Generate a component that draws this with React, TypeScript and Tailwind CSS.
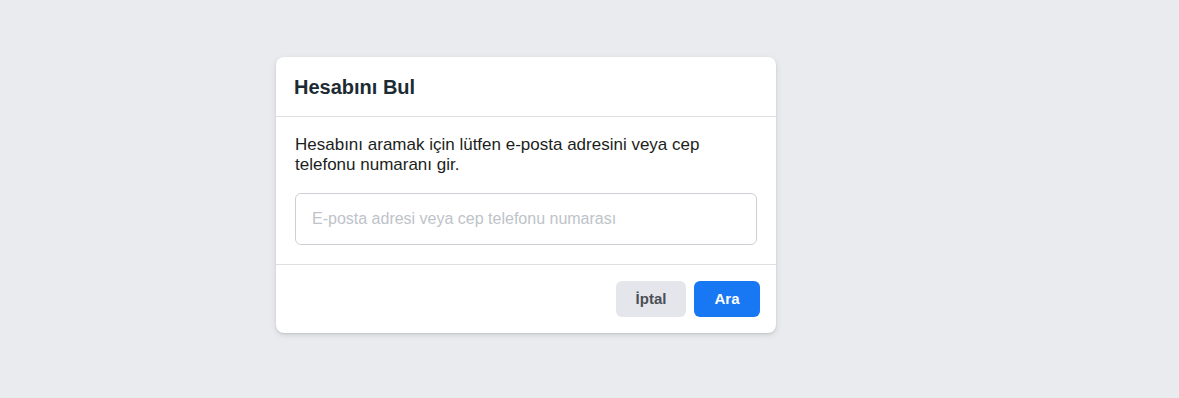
export default function App() {
  return (
    <div
      className="min-h-[398px] bg-[#e9ebee] pl-[276px] pt-[57px]"
      style={{ fontFamily: '"Liberation Sans", Arial, sans-serif' }}
    >
      <div className="w-[500px] rounded-lg bg-white shadow-[0_1px_2px_rgba(0,0,0,0.1),0_2px_6px_rgba(0,0,0,0.1)]">
        <div className="flex h-[60px] items-center border-b border-[#dddfe2] px-[18px]">
          <h2 className="text-[20px] font-bold text-[#1c2b33]">Hesabını Bul</h2>
        </div>

        <div className="border-b border-[#dddfe2] px-[19px] pb-[19px] pt-[18px]">
          <p className="text-[17px] leading-[20px] text-[#1c1e21]">
            Hesabını aramak için lütfen e-posta adresini veya cep telefonu numaranı gir.
          </p>
          <input
            type="text"
            autoFocus
            placeholder="E-posta adresi veya cep telefonu numarası"
            className="mt-[18px] h-[52px] w-full rounded-md border border-[#ccd0d5] px-4 text-[16px] text-[#1c1e21] caret-[#606770] placeholder:text-[#bec3c9] focus:outline-none"
          />
        </div>

        <div className="flex justify-end gap-2 px-4 py-4">
          <button className="h-9 w-[70px] rounded-md bg-[#e4e6eb] text-[15px] font-bold text-[#4b4f56]">
            İptal
          </button>
          <button className="h-9 w-[66px] rounded-md bg-[#1877f2] text-[15px] font-bold text-white">
            Ara
          </button>
        </div>
      </div>
    </div>
  );
}
